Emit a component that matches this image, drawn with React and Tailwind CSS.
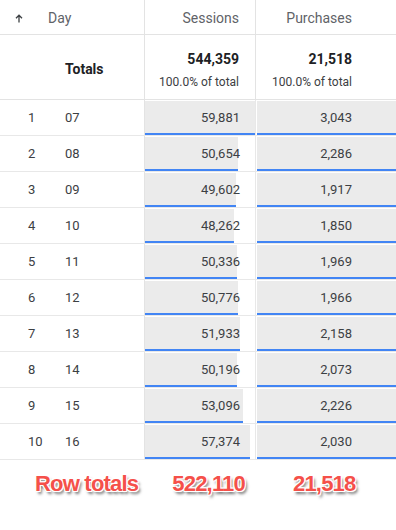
import React from 'react';

const rows = [
  { idx: 1, day: '07', sessions: 59881, purchases: 3043 },
  { idx: 2, day: '08', sessions: 50654, purchases: 2286 },
  { idx: 3, day: '09', sessions: 49602, purchases: 1917 },
  { idx: 4, day: '10', sessions: 48262, purchases: 1850 },
  { idx: 5, day: '11', sessions: 50336, purchases: 1969 },
  { idx: 6, day: '12', sessions: 50776, purchases: 1966 },
  { idx: 7, day: '13', sessions: 51933, purchases: 2158 },
  { idx: 8, day: '14', sessions: 50196, purchases: 2073 },
  { idx: 9, day: '15', sessions: 53096, purchases: 2226 },
  { idx: 10, day: '16', sessions: 57374, purchases: 2030 },
];

const maxSessions = Math.max(...rows.map((r) => r.sessions));
const fmt = (n) => n.toLocaleString('en-US');

const ArrowUp = () => (
  <svg width="8" height="9" viewBox="0 0 8 9" fill="none" className="text-[#3c4043]">
    <path d="M4 8.5V1.2M1 4.2L4 1.2L7 4.2" stroke="currentColor" strokeWidth="1.3" />
  </svg>
);

const App = () => {
  const outline =
    '[text-shadow:-1px_-1px_0_#fff,1px_-1px_0_#fff,-1px_1px_0_#fff,1px_1px_0_#fff,0_-1px_0_#fff,0_1px_0_#fff,2px_3px_3px_rgba(0,0,0,0.55)]';

  return (
    <div className="w-[396px] h-[530px] bg-white font-['Roboto',sans-serif] overflow-hidden">
      {/* Encabezado */}
      <div className="flex h-[35px] border-b border-[#e3e3e3]">
        <div className="w-[145px] border-r border-[#e3e3e3] flex items-center pt-[2px] pl-[15px] text-[14px] text-[#5f6368]">
          <ArrowUp />
          <span className="ml-[25px]">Day</span>
        </div>
        <div className="w-[111px] border-r border-[#e3e3e3] flex items-center justify-end pt-[2px] pr-[16px] text-[14px] text-[#5f6368]">
          Sessions
        </div>
        <div className="flex-1 flex items-center justify-end pt-[2px] pr-[44px] text-[14px] text-[#5f6368]">
          Purchases
        </div>
      </div>

      {/* Totales */}
      <div className="flex h-[65px] border-b border-[#e3e3e3]">
        <div className="w-[145px] border-r border-[#e3e3e3] flex items-center pt-[4px] pl-[65px] text-[14px] font-bold text-[#202124]">
          Totals
        </div>
        <div className="w-[111px] border-r border-[#e3e3e3] flex flex-col items-end justify-center pt-[4px] pr-[16px]">
          <span className="text-[14px] font-bold text-[#202124] leading-[20px]">544,359</span>
          <span className="text-[12px] text-[#3c4043] leading-[16px] mt-[5px]">100.0% of total</span>
        </div>
        <div className="flex-1 flex flex-col items-end justify-center pt-[4px] pr-[44px]">
          <span className="text-[14px] font-bold text-[#202124] leading-[20px]">21,518</span>
          <span className="text-[12px] text-[#3c4043] leading-[16px] mt-[5px]">100.0% of total</span>
        </div>
      </div>

      {/* Filas */}
      {rows.map((r) => (
        <div key={r.idx} className="flex h-[36px] border-b border-[#e8e8e8] text-[13px] text-[#3c4043]">
          <div className="w-[145px] border-r border-[#e3e3e3] flex items-center">
            <span className="w-[65px] pl-[28px]">{r.idx}</span>
            <span>{r.day}</span>
          </div>
          <div className="w-[111px] border-r border-[#e8e8e8] relative flex items-center justify-end pr-[15px]">
            <div
              className="absolute left-0 top-px bottom-0 bg-[#ebebeb] border-b-2 border-[#4285f4]"
              style={{ width: `${(r.sessions / maxSessions) * 100}%` }}
            />
            <span className="relative">{fmt(r.sessions)}</span>
          </div>
          <div className="flex-1 relative flex items-center justify-end pr-[44px]">
            <div className="absolute left-px right-0 top-px bottom-0 bg-[#ebebeb] border-b-2 border-[#4285f4]" />
            <span className="relative">{fmt(r.purchases)}</span>
          </div>
        </div>
      ))}

      {/* Anotación */}
      <div className={`flex mt-[11px] text-[22px] leading-[26px] font-bold tracking-[-0.8px] text-[#f5504a] font-['Liberation_Sans',Arial,sans-serif] ${outline}`}>
        <div className="w-[145px] pl-[35px]">Row totals</div>
        <div className="w-[111px] flex justify-end pr-[11px]">522,110</div>
        <div className="flex-1 pl-[37px]">21,518</div>
      </div>
    </div>
  );
};

export default App;
